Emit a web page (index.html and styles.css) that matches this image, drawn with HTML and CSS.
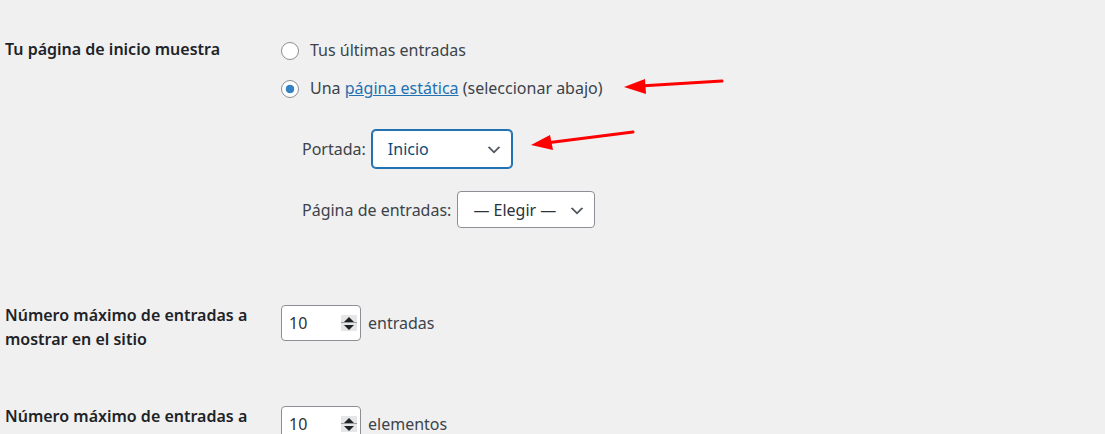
FILE: index.html
```html
<!doctype html>
<html lang="es">

<head>
    <title>Ajustes de lectura</title>
    <link rel="stylesheet" href="styles.css">
</head>

<body>
    <div class="wrap">
        <div class="form-row row-front">
            <div class="row-label">Tu página de inicio muestra</div>
            <div class="row-field">
                <label class="choice"><input type="radio" name="show_on_front" value="posts" />Tus últimas entradas</label>
                <label class="choice"><input type="radio" name="show_on_front" value="page" checked />Una <a href="#">página estática</a> (seleccionar abajo)</label>
                <ul class="page-pickers">
                    <li>
                        <label for="page_on_front">Portada:</label>
                        <span class="select-wrap select-front">
                            <select id="page_on_front" class="is-focused">
                                <option value="2">Inicio</option>
                            </select>
                            <svg class="chevron" viewBox="0 0 20 20"><path d="M5 6l5 5 5-5 2 1-7 7-7-7 2-1z" /></svg>
                        </span>
                    </li>
                    <li>
                        <label for="page_for_posts">Página de entradas:</label>
                        <span class="select-wrap select-posts">
                            <select id="page_for_posts">
                                <option value="0">— Elegir —</option>
                            </select>
                            <svg class="chevron" viewBox="0 0 20 20"><path d="M5 6l5 5 5-5 2 1-7 7-7-7 2-1z" /></svg>
                        </span>
                    </li>
                </ul>
            </div>
        </div>

        <div class="form-row row-number">
            <div class="row-label"><label for="posts_per_page">Número máximo de entradas a mostrar en el sitio</label></div>
            <div class="row-field inline-field">
                <span class="number-box">
                    <input type="text" id="posts_per_page" value="10" />
                    <span class="spinner"><span class="up"></span><span class="down"></span></span>
                </span>
                entradas
            </div>
        </div>

        <div class="form-row row-number row-feed">
            <div class="row-label"><label for="posts_per_rss">Número máximo de entradas a mostrar en el feed</label></div>
            <div class="row-field inline-field">
                <span class="number-box">
                    <input type="text" id="posts_per_rss" value="10" />
                    <span class="spinner"><span class="up"></span><span class="down"></span></span>
                </span>
                elementos
            </div>
        </div>

        <!-- annotation arrows drawn over the screenshot -->
        <svg class="arrows" width="1105" height="434" viewBox="0 0 1105 434">
            <line x1="722" y1="81" x2="640" y2="86" />
            <polygon points="624,87 645,79 646,94" />
            <line x1="633" y1="132" x2="546" y2="143" />
            <polygon points="531,145 550,135 553,150" />
        </svg>
    </div>
</body>

</html>
```

FILE: styles.css
```css
html, body {
    margin: 0;
    height: 100%;
    overflow: hidden;
}

body {
    background-color: #f0f0f1;
    color: #3c434a;
    font-family: "Noto Sans", "Open Sans", sans-serif;
    font-size: 16px;
    line-height: 24px;
}

.wrap {
    position: relative;
    padding-left: 5px;
}

.form-row {
    display: flex;
}

.row-label {
    width: 276px;
    flex: none;
    box-sizing: border-box;
    padding-right: 14px;
    color: #1d2327;
    font-weight: 600;
}

.row-field {
    flex: 1;
}

.row-front {
    padding-top: 37px;
}

.row-front .row-field {
    padding-top: 1px;
}

.choice {
    display: block;
    margin-bottom: 14px;
}

.choice:last-of-type {
    margin-bottom: 0;
}

.choice input {
    appearance: none;
    width: 18px;
    height: 18px;
    margin: 0 11px 0 0;
    vertical-align: -4px;
    border: 1px solid #8c8f94;
    border-radius: 50%;
    background-color: #fff;
}

.choice input:checked {
    background: radial-gradient(circle, #3582c4 0 4px, #fff 4.6px);
}

a {
    color: #2271b1;
    text-decoration: underline;
}

.page-pickers {
    list-style: none;
    margin: 30px 0 0;
    padding: 0 0 0 21px;
}

.page-pickers li {
    display: flex;
    align-items: center;
    gap: 6px;
}

.page-pickers li + li {
    margin-top: 23px;
}

.select-wrap {
    position: relative;
    display: inline-block;
}

select {
    appearance: none;
    display: block;
    height: 38px;
    margin: 0;
    padding: 0 30px 0 15px;
    box-sizing: border-box;
    border: 1px solid #8c8f94;
    border-radius: 4px;
    background-color: #fff;
    color: #2c3338;
    font-family: inherit;
    font-size: 16px;
}

.select-front select {
    width: 140px;
}

.select-posts select {
    width: 138px;
    height: 37px;
}

select.is-focused {
    border-color: #2271b1;
    box-shadow: 0 0 0 1px #2271b1;
    color: #0a4b78;
}

.chevron {
    position: absolute;
    right: 9px;
    top: 11px;
    width: 18px;
    height: 18px;
    fill: #50575e;
    pointer-events: none;
}

.row-number {
    margin-top: 75px;
}

.row-feed {
    margin-top: 53px;
}

.inline-field {
    display: flex;
    align-items: flex-start;
    gap: 7px;
    padding-top: 2px;
    line-height: 36px;
}

.number-box {
    display: flex;
    align-items: center;
    width: 80px;
    height: 36px;
    flex: none;
    box-sizing: border-box;
    padding: 0 3px 0 7px;
    border: 1px solid #8c8f94;
    border-radius: 4px;
    background-color: #fff;
}

.number-box input {
    width: 50px;
    border: 0;
    padding: 0;
    outline: none;
    background: transparent;
    color: #2c3338;
    font-family: inherit;
    font-size: 16px;
}

.spinner {
    display: flex;
    flex-direction: column;
    justify-content: space-between;
    width: 16px;
    height: 16px;
    margin-left: auto;
    box-sizing: border-box;
    padding: 2px 0 1px;
    background: linear-gradient(#e6e6e6 0 7px, #9a9a9a 7px 8px, #e6e6e6 8px);
}

.spinner .up,
.spinner .down {
    align-self: center;
    width: 0;
    height: 0;
    border-left: 5px solid transparent;
    border-right: 5px solid transparent;
}

.spinner .up {
    border-bottom: 5px solid #1d2327;
}

.spinner .down {
    border-top: 5px solid #1d2327;
}

.arrows {
    position: absolute;
    left: 0;
    top: 0;
    pointer-events: none;
}

.arrows line {
    stroke: #ff0000;
    stroke-width: 3;
    stroke-linecap: round;
}

.arrows polygon {
    fill: #ff0000;
}
```
